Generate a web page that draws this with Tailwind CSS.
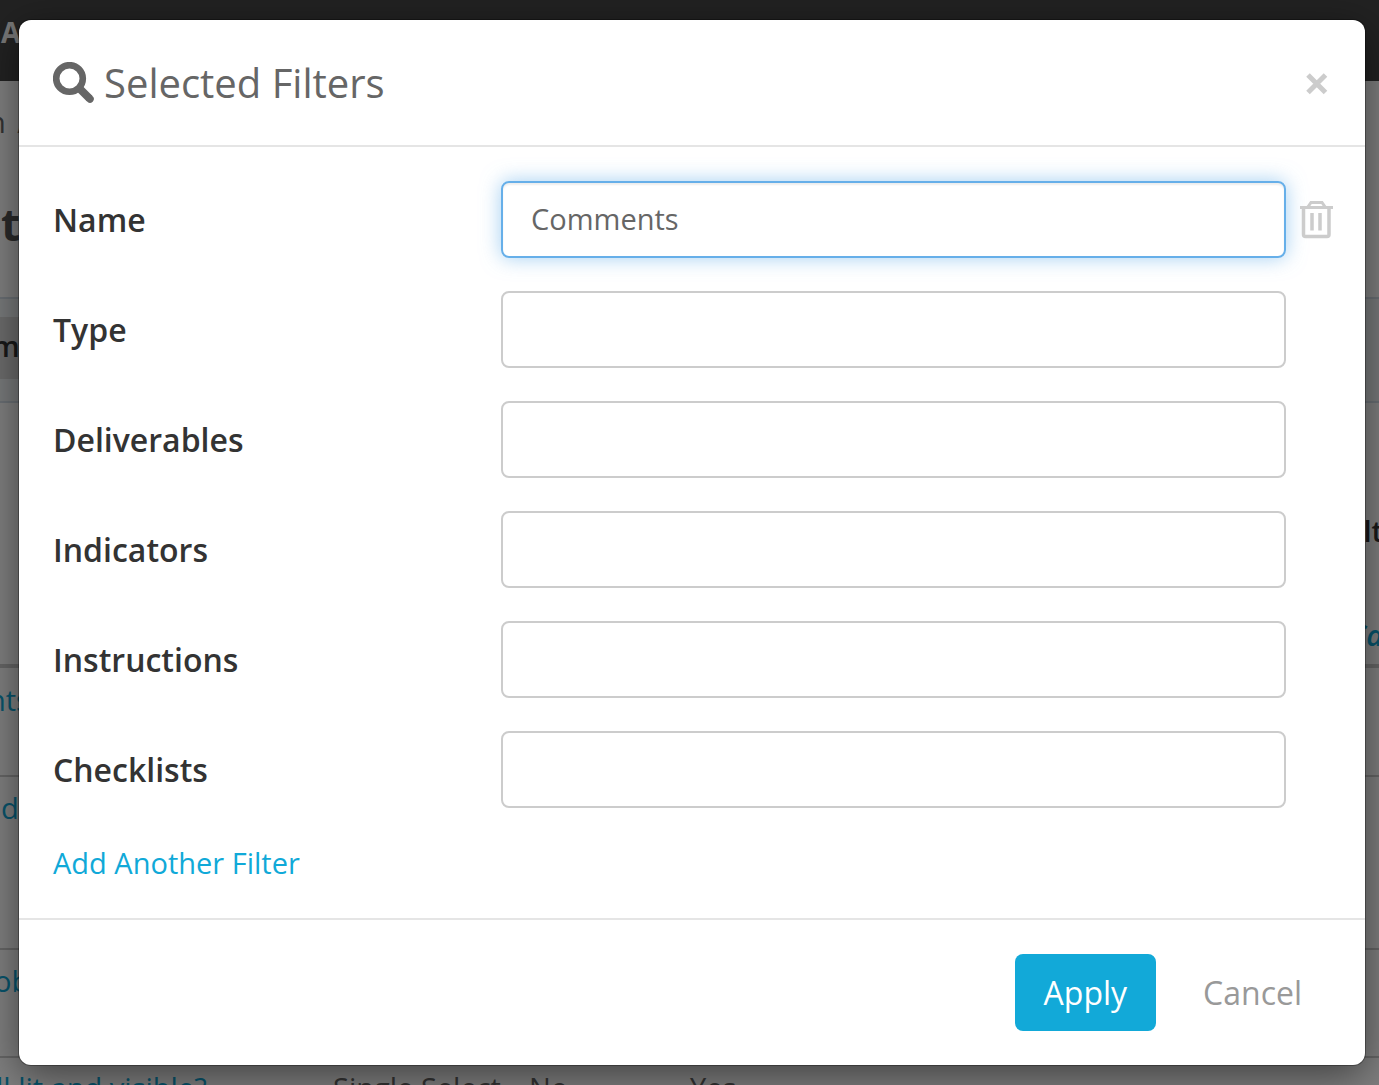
<!DOCTYPE html>
<html lang="en">
<head>
<meta charset="utf-8">
<title>Selected Filters</title>
<script src="https://cdn.jsdelivr.net/npm/@tailwindcss/browser@4"></script>
</head>
<body class="relative h-screen overflow-hidden bg-white font-['Open_Sans',sans-serif] text-[#666]">
  <!-- Page behind the dialog -->
  <div class="whitespace-nowrap text-[29px] leading-10" aria-hidden="true">
    <div class="h-[81px] bg-[#444] px-px pt-3 text-[28px] font-bold text-[#eee]">A</div>
    <div class="h-[216px] bg-white">
      <div class="-ml-3 pt-[21px]">n <span class="ml-1">/</span></div>
      <div class="pt-[60px] pl-px text-[44px] font-bold leading-[44px] text-[#555]">t</div>
    </div>
    <div class="h-[106px] border-y-2 border-[#d5dfe8] bg-[#f0f5f7] py-[18px]">
      <div class="-ml-2 h-[62px] w-12 bg-[#d8d8d8] pt-[9px] font-semibold text-[#333]">m</div>
    </div>
    <div class="flex h-[265px] flex-col items-end border-b-4 border-[#ccc] pt-[108px]">
      <div class="-mr-1 font-semibold text-[#333]">lt</div>
      <div class="-mr-1 pt-16 font-semibold italic text-[#10a9d8]">Ca</div>
    </div>
    <div class="h-[109px] border-b-2 border-[#ccc] pt-3 text-[#10a9d8]"><div class="-ml-3">nts</div></div>
    <div class="h-[173px] border-b-2 border-[#ccc] pt-[11px] text-[#10a9d8]"><div class="ml-px">d</div></div>
    <div class="h-[108px] border-b-2 border-[#ccc] pt-[11px] text-[#10a9d8]"><div class="-ml-1.5">ob</div></div>
    <div class="flex pt-[10px]"><span class="-ml-1 w-[337px] text-[#10a9d8]">ll lit and visible?</span><span class="w-[196px]">Single Select</span><span class="w-[161px]">No</span><span>Yes</span></div>
  </div>

  <div class="absolute inset-0 bg-black/50 pt-5 pr-[14px] pb-5 pl-[19px]">
    <div role="dialog" aria-labelledby="title" class="rounded-xl bg-white shadow-[0_0_0_1px_rgba(0,0,0,0.3),0_10px_40px_rgba(0,0,0,0.5)]">
      <header class="flex h-[127px] items-center justify-between border-b-2 border-[#e5e5e5] pr-9 pl-[34px]">
        <h2 id="title" class="flex items-center gap-[10px] text-[40px] leading-[56px]">
          <svg class="size-[41px]" viewBox="0 0 41 41" fill="none" stroke="currentColor" aria-hidden="true"><circle cx="16.500" cy="16.500" r="13.300" stroke-width="6.600"/><path d="M27 27L36.500 36.500" stroke-width="8"/><path d="M36.500 36.500L37 37" stroke-width="7.500" stroke-linecap="round"/></svg>
          Selected Filters
        </h2>
        <button type="button" aria-label="Close" class="text-[#ccc]">
          <svg class="size-6" viewBox="0 0 24 24" fill="none" stroke="currentColor" stroke-width="5"><path d="M3 4L20.500 21.500M20.500 4L3 21.500"/></svg>
        </button>
      </header>

      <form class="flex flex-col gap-[33px] pt-[34px] pr-8 pb-[33px] pl-[34px] text-[32px] font-semibold leading-[44px] text-[#333]">
        <div class="flex items-center">
          <label for="name" class="w-[448px] shrink-0">Name</label>
          <input id="name" type="text" value="Comments" class="h-[77px] min-w-0 grow rounded-lg border-2 border-[#66afe9] px-7 pb-[3px] text-[29px] font-normal text-[#666] shadow-[inset_0_2px_2px_rgba(0,0,0,0.07),0_0_20px_rgba(102,175,233,0.6)] outline-none">
          <button type="button" aria-label="Remove filter" class="ml-[14px] w-[33px] shrink-0 text-[#ccc]">
            <svg class="h-10 w-[33px]" viewBox="0 0 33 40" fill="none" stroke="currentColor" stroke-width="3"><path d="M0 7.500H33M7.500 7.500L11 2.500H22L25.500 7.500"/><path d="M3.500 7V34.500Q3.500 36.500 5.500 36.500H27Q29 36.500 29 34.500V7M12 13V30.500M20 13V30.500" stroke-width="3.500"/></svg>
          </button>
        </div>
        <div class="flex items-center pr-[47px]"><label for="type" class="w-[448px] shrink-0">Type</label><input id="type" type="text" class="h-[77px] min-w-0 grow rounded-lg border-2 border-[#ccc] px-7 text-[29px] font-normal"></div>
        <div class="flex items-center pr-[47px]"><label for="deliverables" class="w-[448px] shrink-0">Deliverables</label><input id="deliverables" type="text" class="h-[77px] min-w-0 grow rounded-lg border-2 border-[#ccc] px-7 text-[29px] font-normal"></div>
        <div class="flex items-center pr-[47px]"><label for="indicators" class="w-[448px] shrink-0">Indicators</label><input id="indicators" type="text" class="h-[77px] min-w-0 grow rounded-lg border-2 border-[#ccc] px-7 text-[29px] font-normal"></div>
        <div class="flex items-center pr-[47px]"><label for="instructions" class="w-[448px] shrink-0">Instructions</label><input id="instructions" type="text" class="h-[77px] min-w-0 grow rounded-lg border-2 border-[#ccc] px-7 text-[29px] font-normal"></div>
        <div class="flex items-center pr-[47px]"><label for="checklists" class="w-[448px] shrink-0">Checklists</label><input id="checklists" type="text" class="h-[77px] min-w-0 grow rounded-lg border-2 border-[#ccc] px-7 text-[29px] font-normal"></div>
        <a href="#" class="self-start text-[29px] font-normal text-[#10a9d8]">Add Another Filter</a>
      </form>

      <footer class="flex justify-end gap-[19px] border-t-2 border-[#e5e5e5] pt-[34px] pr-[35px] pb-[34px] text-[32px] leading-[44px]">
        <button type="button" class="h-[77px] rounded-lg bg-[#12a9d8] px-[29px] pt-px text-white">Apply</button>
        <button type="button" class="h-[77px] px-7 pt-px text-[#999]">Cancel</button>
      </footer>
    </div>
  </div>
</body>
</html>
